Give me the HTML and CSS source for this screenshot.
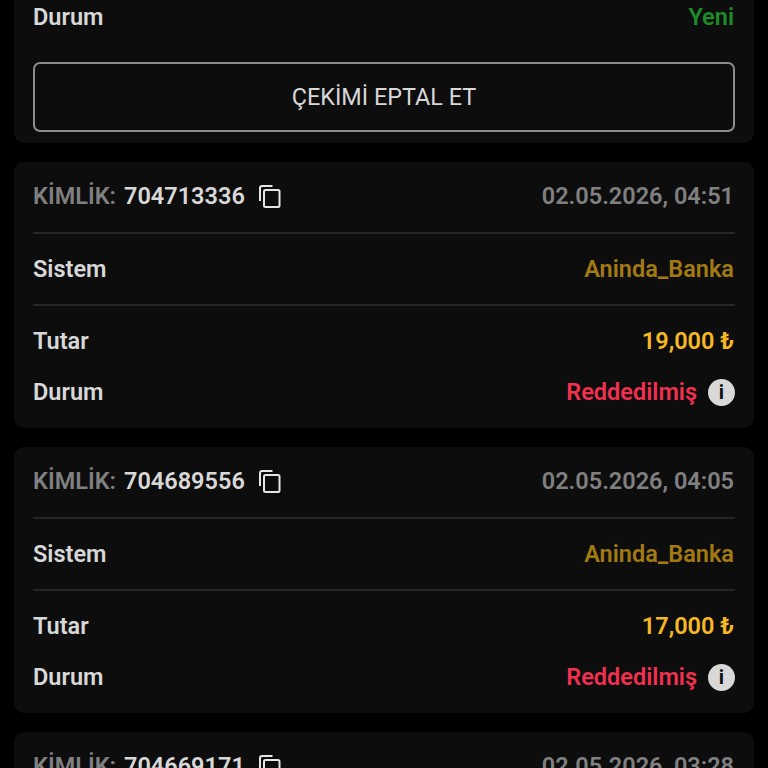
FILE: index.html
```html
<!DOCTYPE html>
<html lang="tr">
    <head>
        <meta charset="utf-8">
        <meta name="viewport" content="width=device-width, initial-scale=1" />
        <title>Çekim geçmişi</title>
        <link rel="stylesheet" href="styles.css">
    </head>
    <body>
        <div class="list">
            <div class="card card-first">
                <div class="row row-status">
                    <span class="label">Durum</span>
                    <span class="status-new">Yeni</span>
                </div>
                <button class="cancel">ÇEKİMİ EPTAL ET</button>
            </div>

            <div class="card">
                <div class="head">
                    <div class="id">
                        <span class="id-label">KİMLİK:</span>
                        <span class="id-value">704713336</span>
                        <svg class="copy" width="24" height="24" viewBox="0 0 24 24"><path d="M14.5 2H4.2C3 2 2 3 2 4.2V17" /><rect x="6" y="6" width="15.5" height="17" rx="1.5" /></svg>
                    </div>
                    <span class="date">02.05.2026, 04:51</span>
                </div>
                <div class="row row-system">
                    <span class="label">Sistem</span>
                    <span class="system">Aninda_Banka</span>
                </div>
                <div class="details">
                    <div class="row">
                        <span class="label">Tutar</span>
                        <span class="amount">19,000 ₺</span>
                    </div>
                    <div class="row">
                        <span class="label">Durum</span>
                        <span class="status-rejected">Reddedilmiş <span class="info">i</span></span>
                    </div>
                </div>
            </div>

            <div class="card">
                <div class="head">
                    <div class="id">
                        <span class="id-label">KİMLİK:</span>
                        <span class="id-value">704689556</span>
                        <svg class="copy" width="24" height="24" viewBox="0 0 24 24"><path d="M14.5 2H4.2C3 2 2 3 2 4.2V17" /><rect x="6" y="6" width="15.5" height="17" rx="1.5" /></svg>
                    </div>
                    <span class="date">02.05.2026, 04:05</span>
                </div>
                <div class="row row-system">
                    <span class="label">Sistem</span>
                    <span class="system">Aninda_Banka</span>
                </div>
                <div class="details">
                    <div class="row">
                        <span class="label">Tutar</span>
                        <span class="amount">17,000 ₺</span>
                    </div>
                    <div class="row">
                        <span class="label">Durum</span>
                        <span class="status-rejected">Reddedilmiş <span class="info">i</span></span>
                    </div>
                </div>
            </div>

            <div class="card">
                <div class="head">
                    <div class="id">
                        <span class="id-label">KİMLİK:</span>
                        <span class="id-value">704669171</span>
                        <svg class="copy" width="24" height="24" viewBox="0 0 24 24"><path d="M14.5 2H4.2C3 2 2 3 2 4.2V17" /><rect x="6" y="6" width="15.5" height="17" rx="1.5" /></svg>
                    </div>
                    <span class="date">02.05.2026, 03:28</span>
                </div>
            </div>
        </div>
    </body>
</html>
```

FILE: styles.css
```css
html, body {
    height: 768px;
    overflow: hidden;
}
body {
    background: #000;
    color: #d8d8d8;
    margin: 0;
    font-family: Roboto, "Liberation Sans", sans-serif;
    font-size: 23.5px;
    font-weight: 600;
}
.list {
    display: flex;
    flex-direction: column;
    gap: 19px;
    padding: 0 14px;
}
.card {
    background: #0d0d0d;
    border-radius: 10px;
    padding: 0 19px;
    height: 266px;
    box-sizing: border-box;
    flex: none;
}
.card-first {
    border-radius: 0 0 10px 10px;
    height: 143px;
}
.row {
    display: flex;
    justify-content: space-between;
    align-items: center;
}
.row-status { height: 33px; }
.label { color: #d8d8d8; }
.status-new, .date, .system, .amount { margin-right: 1px; }
.status-new { color: #1c8a28; }
.cancel {
    display: block;
    width: 100%;
    height: 70px;
    margin-top: 29px;
    background: transparent;
    border: 2px solid #8c8c8c;
    border-radius: 7px;
    color: #d8d8d8;
    font: 400 23.4px Roboto, "Liberation Sans", sans-serif;
}
.head {
    display: flex;
    justify-content: space-between;
    align-items: center;
    height: 72px;
    padding-bottom: 2px;
    border-bottom: 2px solid #262626;
    box-sizing: border-box;
}
.id {
    display: flex;
    align-items: center;
}
.id-label { color: #808080; margin-right: 8px; }
.id-value { color: #d8d8d8; }
.copy {
    margin-left: 13px;
    fill: none;
    stroke: #e6e6e6;
    stroke-width: 2;
}
.date { color: #808080; }
.row-system {
    height: 72px;
    border-bottom: 2px solid #262626;
    box-sizing: border-box;
}
.system { color: #a37a12; }
.details {
    display: flex;
    flex-direction: column;
    gap: 23px;
    padding-top: 21px;
}
.details .row { height: 28px; }
.amount { color: #f6b823; }
.status-rejected {
    color: #f0304f;
    display: flex;
    align-items: center;
    gap: 11px;
}
.info {
    width: 27px;
    height: 27px;
    border-radius: 50%;
    background: #d8d8d8;
    color: #111;
    font-size: 20px;
    font-weight: 700;
    display: flex;
    align-items: center;
    justify-content: center;
}
```
